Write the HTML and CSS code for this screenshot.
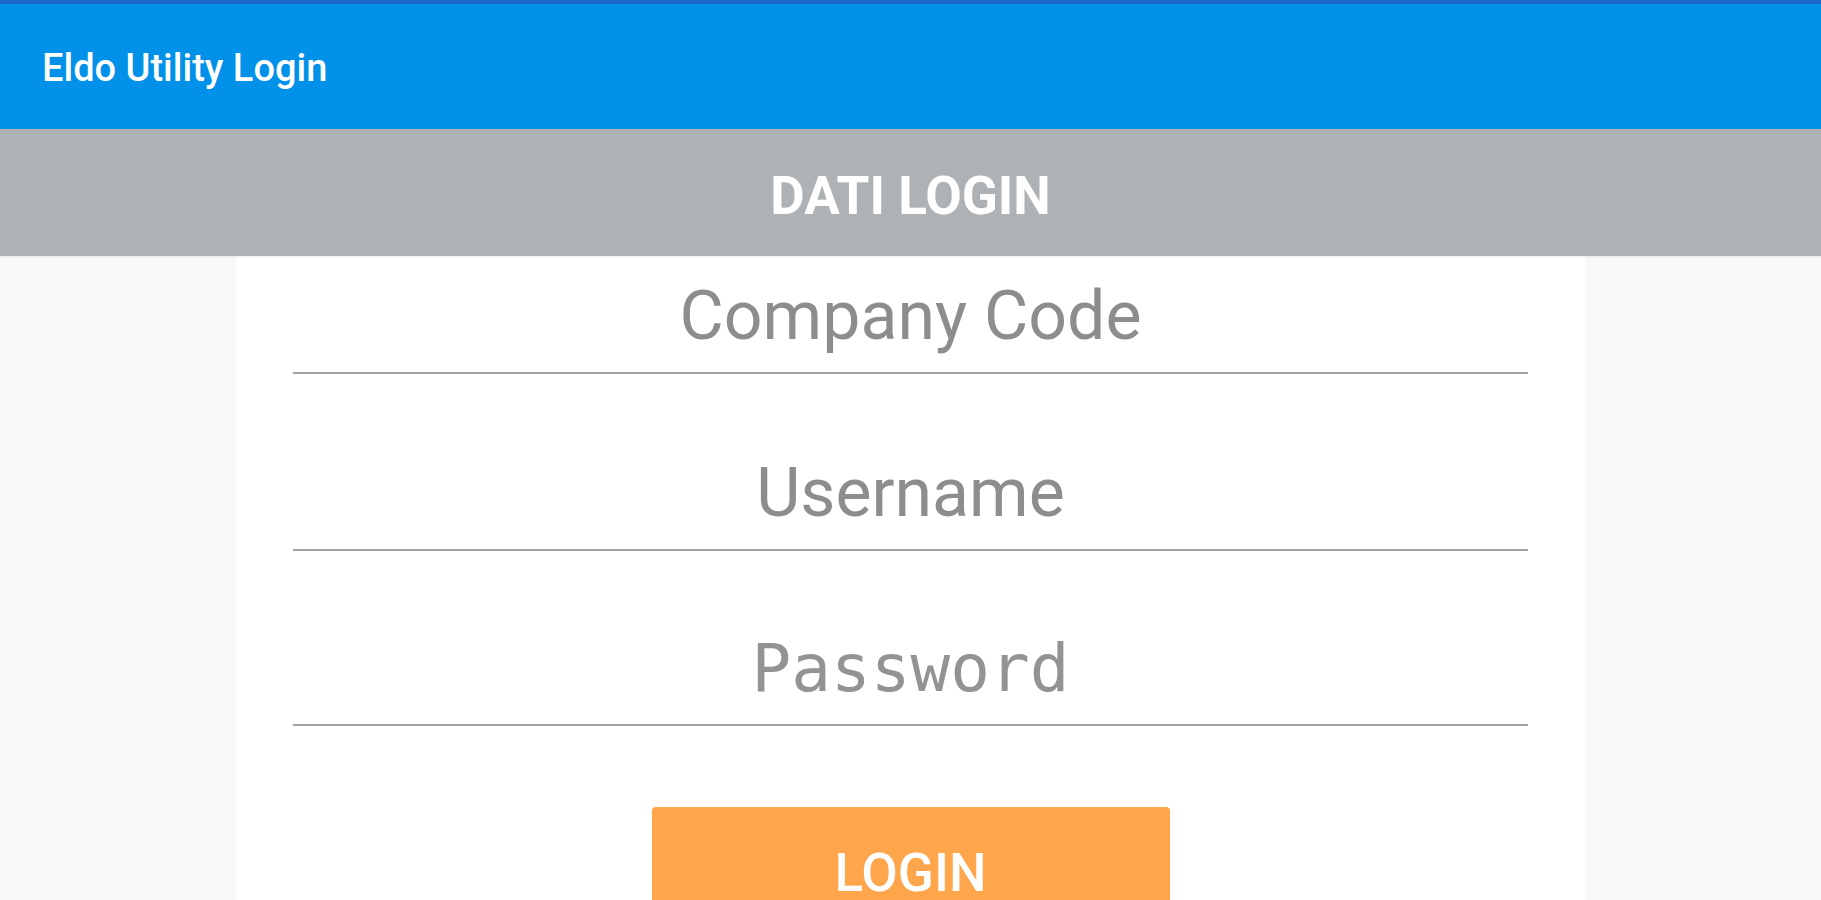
FILE: index.html
```html
<!DOCTYPE html>
<html lang="it">
<head>
<meta charset="utf-8">
<title>Eldo Utility Login</title>
<link rel="stylesheet" href="styles.css">
</head>
<body>
<div class="app">
  <header class="appbar">
    <h1 class="title">Eldo Utility Login</h1>
  </header>
  <div class="subbar">DATI LOGIN</div>
  <main class="page">
    <form class="card">
      <div class="field field-first"><span class="hint">Company Code</span></div>
      <div class="field"><span class="hint">Username</span></div>
      <div class="field"><span class="hint hint-mono">Password</span></div>
      <div class="actions">
        <button type="button" class="btn">LOGIN</button>
      </div>
    </form>
  </main>
</div>
</body>
</html>
```

FILE: styles.css
```css
html, body {
  margin: 0;
  padding: 0;
  height: 100%;
  overflow: hidden;
}

body {
  font-family: Roboto, "Noto Sans", "Liberation Sans", sans-serif;
  background: #fafafa;
}

.app {
  height: 100vh;
  display: flex;
  flex-direction: column;
  overflow: hidden;
}

.appbar {
  flex: none;
  height: 125px;
  border-top: 4px solid #1d66c9;
  background: #0191e9;
  display: flex;
  align-items: center;
  padding-left: 42px;
}

.title {
  margin: 0;
  color: #ffffff;
  font-size: 38px;
  font-weight: 500;
  line-height: 1;
  padding-top: 2px;
}

.subbar {
  flex: none;
  height: 127px;
  background: #afb2b4;
  color: #ffffff;
  font-size: 53px;
  font-weight: 700;
  display: flex;
  align-items: center;
  justify-content: center;
  padding-top: 7px;
  box-sizing: border-box;
  box-shadow: 0 1px 2px rgba(0, 0, 0, 0.08);
  position: relative;
  z-index: 1;
}

.page {
  flex: 1;
  display: flex;
  justify-content: center;
  background: #f9f9f9;
}

.card {
  width: 1349px;
  background: #ffffff;
  padding: 0 57px;
  box-sizing: border-box;
}

.field {
  display: flex;
  justify-content: center;
  padding-bottom: 22px;
  border-bottom: 2px solid #a2a2a2;
  margin-top: 85px;
}

.field-first {
  margin-top: 26px;
}

.hint {
  font-size: 68px;
  line-height: 68px;
  color: #8d8d8d;
  font-weight: 400;
}

.hint-mono {
  font-family: "DejaVu Sans Mono", "Liberation Mono", monospace;
  font-size: 66px;
  line-height: 66px;
  color: #939393;
}

.actions {
  display: flex;
  justify-content: center;
  margin-top: 81px;
}

.btn {
  width: 518px;
  height: 134px;
  border: none;
  border-radius: 4px;
  background: #ffa64c;
  color: #ffffff;
  font-family: Roboto, "Noto Sans", "Liberation Sans", sans-serif;
  font-size: 53px;
  font-weight: 500;
  line-height: 53px;
  padding: 40px 0 41px;
  display: flex;
  justify-content: center;
  align-items: flex-start;
  box-shadow: 0 1px 2px rgba(0, 0, 0, 0.08);
}
```
